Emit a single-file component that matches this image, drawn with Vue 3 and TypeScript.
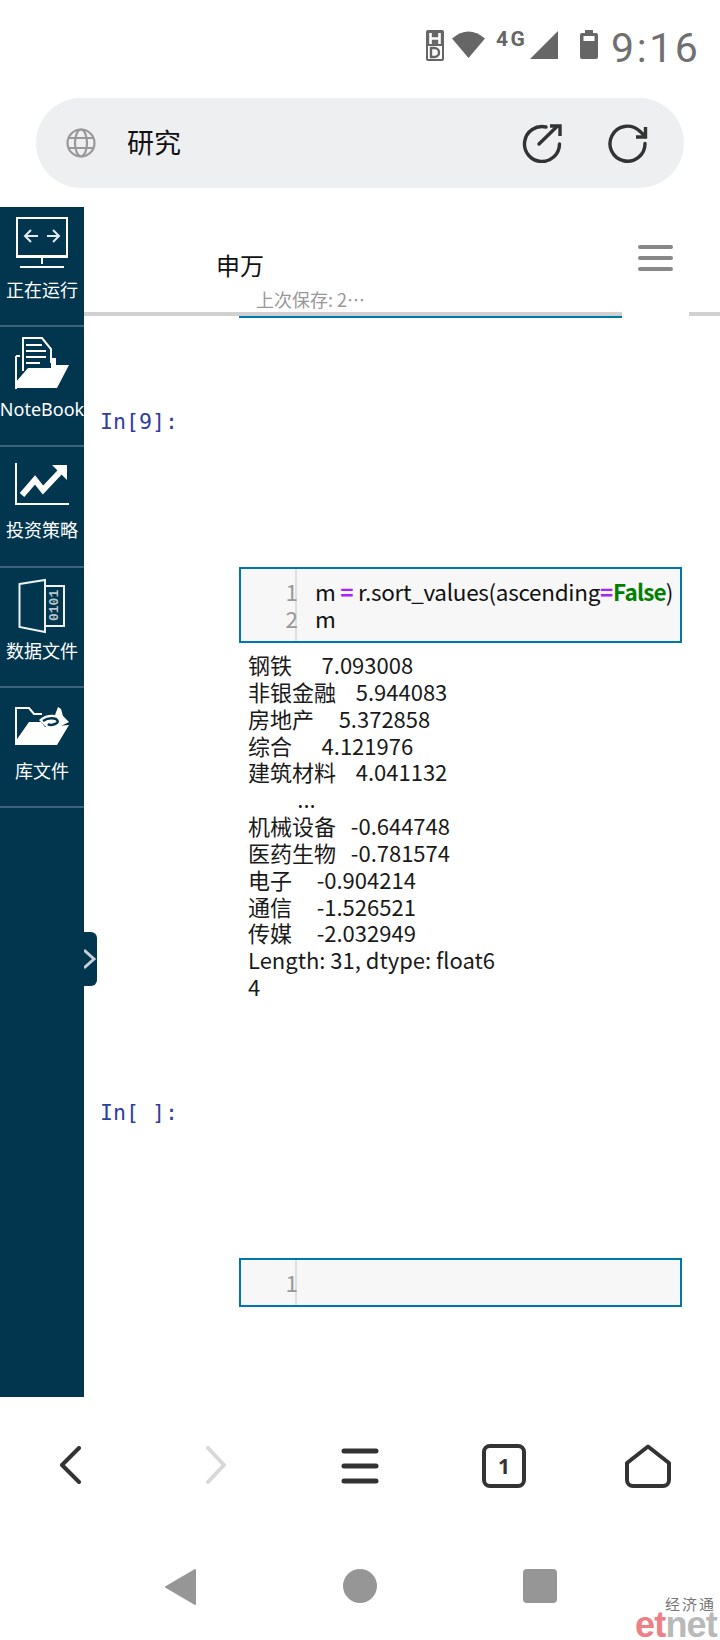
<script setup lang="ts">
const outputLines: string[] = [
  '钢铁      7.093008',
  '非银金融    5.944083',
  '房地产     5.372858',
  '综合      4.121976',
  '建筑材料    4.041132',
  '          ...',
  '机械设备   -0.644748',
  '医药生物   -0.781574',
  '电子     -0.904214',
  '通信     -1.526521',
  '传媒     -2.032949',
  'Length: 31, dtype: float6',
  '4',
]
</script>

<template>
  <div class="phone">
    <header class="status">
      <svg class="hd" width="18" height="31" viewBox="0 0 18 31">
        <rect width="18" height="31" rx="2" fill="#666" />
        <path d="M4.500 3v11M13.500 3v11M4.500 8.500h9" stroke="#fff" stroke-width="2.600" fill="none" />
        <rect x="2" y="16" width="14" height="13" fill="#fff" />
        <path d="M5 18h3.500a4.500 4.500 0 0 1 0 9H5z" stroke="#666" stroke-width="2.400" fill="none" />
      </svg>
      <svg class="wifi" width="33" height="28" viewBox="0 0 33 28">
        <path d="M0 8.500Q16.500-5.500 33 8.500L16.500 28z" fill="#666" />
      </svg>
      <span class="net">4G</span>
      <svg class="signal" width="28" height="28" viewBox="0 0 28 28">
        <path d="M28 0V28H0z" fill="#666" />
      </svg>
      <svg class="battery" width="18" height="29" viewBox="0 0 18 29">
        <path d="M5 3V0h8v3h3a2 2 0 0 1 2 2v22a2 2 0 0 1-2 2H2a2 2 0 0 1-2-2V5a2 2 0 0 1 2-2z" fill="#666" />
        <rect x="3.500" y="6" width="11" height="5" fill="#fff" />
      </svg>
      <span class="time">9:16</span>
    </header>

    <div class="urlbar">
      <svg class="globe" width="30" height="30" viewBox="0 0 30 30" fill="none" stroke="#999" stroke-width="2.200">
        <circle cx="15" cy="15" r="13.500" />
        <ellipse cx="15" cy="15" rx="6" ry="13.500" />
        <path d="M3 10h24M3 20h24" />
      </svg>
      <span class="url-text">研究</span>
      <svg class="share" width="40" height="40" viewBox="0 0 40 40" fill="none" stroke="#333" stroke-width="3.400" stroke-linecap="round">
        <path d="M37.500 21A17.500 17.500 0 1 1 24 4" />
        <path d="M17 21L35 3.500" />
        <path d="M28 3h10v10" stroke-linecap="butt" />
      </svg>
      <svg class="reload" width="40" height="40" viewBox="0 0 40 40" fill="none" stroke="#333" stroke-width="3.400" stroke-linecap="round">
        <path d="M37 20.500A17.500 17.500 0 1 1 31 7.500L37 13" />
        <path d="M37.500 4V14H28" stroke-linecap="butt" />
      </svg>
    </div>

    <div class="body">
      <nav class="sidebar">
        <div class="side-item">
          <div class="side-icon">
            <svg class="ic1" width="52" height="52" viewBox="0 0 52 52" fill="none" stroke="#fff" stroke-width="2">
              <rect x="1" y="1" width="50" height="39" />
              <path d="M0 39.500h52" stroke-width="3" />
              <path d="M26 40v7M4 50h44" />
              <path d="M9 19h13M15 13l-6 6 6 6M43 19H31M37 13l6 6-6 6" stroke="#e4ebee" stroke-width="2" />
            </svg>
          </div>
          <span>正在运行</span>
        </div>
        <div class="side-item">
          <div class="side-icon">
            <svg class="ic2" width="54" height="52" viewBox="0 0 54 52">
              <path d="M1 52V19M1 19h4M8 34V1h19l9 11v14" fill="none" stroke="#fff" stroke-width="2" />
              <path d="M11 8h16M11 14h20M11 20h20M11 26h14" stroke="#fff" stroke-width="2" />
              <path d="M0 51V46L13 31H36V21h5v7H54L42 51z" fill="#fff" />
            </svg>
          </div>
          <span class="latin">NoteBook</span>
        </div>
        <div class="side-item">
          <div class="side-icon">
            <svg class="ic3" width="54" height="42" viewBox="0 0 54 42" fill="none" stroke="#fff">
              <path d="M1 0V41H54" stroke-width="2" />
              <path d="M7 32L20 17L28 27L45 9" stroke-width="6" />
              <path d="M37 2H52V17z" fill="#fff" stroke="none" />
            </svg>
          </div>
          <span>投资策略</span>
        </div>
        <div class="side-item">
          <div class="side-icon">
            <svg class="ic4" width="48" height="56" viewBox="0 0 48 56" fill="none" stroke="#eef2f4" stroke-width="2">
              <path d="M1.500 6L27 2V54L1.500 49z" />
              <path d="M27 8H46V48H27" />
              <text x="-43" y="40" transform="rotate(-90)" class="bits">0101</text>
            </svg>
          </div>
          <span>数据文件</span>
        </div>
        <div class="side-item">
          <div class="side-icon">
            <svg class="ic5" width="54" height="38" viewBox="0 0 54 38">
              <path d="M1 37V1H14L19 7H27" fill="none" stroke="#fff" stroke-width="2" />
              <path d="M0 38V35L14 15H26L30 20L54 18L42 38z" fill="#fff" />
              <path d="M24 13Q30 7 40 8L43 0L46 2L48 9L54 15L44 20Q34 24 30 19" fill="#fff" />
              <path d="M28 14Q34 10 41 12Q45 15 40 17Q35 19 33 17" fill="none" stroke="#02364f" stroke-width="2.500" />
            </svg>
          </div>
          <span>库文件</span>
        </div>
        <div class="toggle">
          <svg width="13" height="24" viewBox="0 0 13 24" fill="none" stroke="#c3d0d7" stroke-width="3">
            <path d="M0 3L10 12L0 21" />
          </svg>
        </div>
      </nav>

      <main class="content">
        <div class="nb-head">
          <div class="titles">
            <div class="nb-title">申万</div>
            <div class="nb-saved">上次保存: 2…</div>
          </div>
          <div class="menu"><i></i><i></i><i></i></div>
        </div>
        <div class="rules">
          <div class="rule-main">
            <div class="rule-gray"></div>
            <div class="rule-blue"></div>
          </div>
          <div class="rule-end"></div>
        </div>

        <div class="prompt first">In[9]:</div>
        <div class="cell two">
          <div class="gutter"><div>1</div><div>2</div></div>
          <div class="code">
            <div>m <b class="op">=</b> r.sort_values(ascending<b class="op">=</b><b class="kw">False</b>)</div>
            <div>m</div>
          </div>
        </div>
        <pre class="output"><template v-for="line in outputLines" :key="line">{{ line + '\n' }}</template></pre>

        <div class="prompt second">In[ ]:</div>
        <div class="cell one">
          <div class="gutter"><div>1</div></div>
          <div class="code"></div>
        </div>
      </main>
    </div>

    <footer class="browser-nav">
      <svg width="28" height="40" viewBox="0 0 28 40" fill="none" stroke="#333" stroke-width="4" stroke-linecap="round" stroke-linejoin="round">
        <path d="M21 2L4 19L21 36" />
      </svg>
      <svg width="28" height="40" viewBox="0 0 28 40" fill="none" stroke="#d8d8d8" stroke-width="4" stroke-linecap="round" stroke-linejoin="round">
        <path d="M6 2L22 19L6 36" />
      </svg>
      <svg width="38" height="36" viewBox="0 0 38 36" fill="none" stroke="#333" stroke-width="5" stroke-linecap="round">
        <path d="M3 3h32M3 18h32M3 33h32" />
      </svg>
      <div class="tabs">1</div>
      <svg width="46" height="44" viewBox="0 0 46 44" fill="none" stroke="#333" stroke-width="4" stroke-linejoin="round">
        <path d="M23 2.500L44 19V36a6 6 0 0 1-6 6H8a6 6 0 0 1-6-6V19z" />
      </svg>
    </footer>

    <footer class="system-nav">
      <svg width="33" height="38" viewBox="0 0 33 38"><path d="M31 2V36L2 19z" fill="#969696" stroke="#969696" stroke-width="2" stroke-linejoin="round" /></svg>
      <div class="dot"></div>
      <div class="square"></div>
    </footer>

    <div class="watermark">
      <div class="wm-cn">经济通</div>
      <div class="wm-en"><span class="et">et</span><span class="net-logo">net</span></div>
    </div>
  </div>
</template>

<style>
html, body { margin: 0; background: #fff; }
</style>

<style scoped>
.phone {
  position: relative;
  width: 720px;
  height: 1640px;
  overflow: hidden;
  background: #fff;
  font-family: "Noto Sans CJK SC", "Noto Sans", sans-serif;
}
.status {
  height: 98px;
  box-sizing: border-box;
  padding: 30px 0 0 426px;
  display: flex;
  align-items: flex-start;
}
.wifi { margin-left: 8px; }
.net {
  margin-left: 11px;
  width: 33px;
  font: 700 21px/19px Roboto, sans-serif;
  letter-spacing: 2.5px;
  color: #666;
  white-space: nowrap;
}
.signal { margin-left: 1px; margin-top: 1px; }
.battery { margin-left: 22px; }
.time {
  margin-left: 13px;
  font: 400 41px/36px Roboto, sans-serif;
  letter-spacing: 2.6px;
  color: #707070;
}
.urlbar {
  margin: 0 36px;
  height: 90px;
  border-radius: 45px;
  background: #eeeff1;
  display: flex;
  align-items: center;
  padding-left: 30px;
  color: #111;
}
.url-text { margin: -4px 0 0 31px; font-size: 27px; flex: 1; }
.share { margin-right: 46px; }
.reload { margin-right: 36px; }

.body {
  margin-top: 19px;
  height: 1190px;
  display: flex;
}
.sidebar {
  position: relative;
  width: 84px;
  flex: none;
  background: #02364f;
  color: #fff;
  font-size: 18px;
}
.side-item {
  height: 120.2px;
  box-sizing: border-box;
  border-bottom: 2px solid #3f6479;
  display: flex;
  flex-direction: column;
  align-items: center;
  white-space: nowrap;
}
.side-icon { height: 70px; flex: none; }
.side-icon svg { display: block; }
.ic1, .ic2, .ic4 { margin-top: 10px; }
.ic3 { margin-top: 16px; }
.ic5 { margin-top: 19px; }
.side-item span { line-height: 24px; }
.latin { font-family: "Noto Sans", sans-serif; font-size: 18px; }
.bits { font: 700 13px "Liberation Mono", monospace; fill: #b9c6cd; stroke: none; }
.toggle {
  position: absolute;
  left: 84px;
  top: 725px;
  width: 13px;
  height: 54px;
  background: #02364f;
  border-radius: 0 6px 6px 0;
  display: flex;
  align-items: center;
}

.content { flex: 1; min-width: 0; }
.nb-head {
  height: 105px;
  display: flex;
  align-items: flex-start;
  justify-content: space-between;
}
.nb-title {
  margin: 41px 0 0 132px;
  font-size: 24px;
  line-height: 34px;
  color: #111;
}
.nb-saved {
  margin: 5px 0 0 172px;
  font-size: 18px;
  line-height: 24px;
  color: #999;
  white-space: nowrap;
}
.menu {
  margin: 38px 47px 0 0;
  width: 35px;
  display: flex;
  flex-direction: column;
  gap: 7px;
}
.menu i { display: block; height: 4px; background: #888; border-radius: 2px; }
.rules { display: flex; height: 6px; }
.rule-main { width: 538px; }
.rule-gray { height: 4px; background: #d0d0d0; }
.rule-blue { height: 2px; margin-left: 155px; background: #0077aa; }
.rule-end { margin-left: 67px; flex: 1; height: 4px; background: #d0d0d0; }
.prompt {
  margin-left: 16px;
  font: 21.6px/28px "DejaVu Sans Mono", monospace;
  color: #303f9f;
}
.first { margin-top: 90px; }
.second { margin-top: 99px; }
.cell {
  margin-left: 155px;
  width: 443px;
  box-sizing: border-box;
  border: 2px solid #0077aa;
  background: #f7f7f7;
  display: flex;
  color: #111;
  font-size: 22.5px;
  line-height: 27px;
}
.cell.two { margin-top: 131px; height: 76px; padding-top: 9px; }
.cell.one { margin-top: 131px; height: 49px; }
.gutter {
  width: 56px;
  box-sizing: border-box;
  text-align: right;
  color: #999;
  border-right: 2px solid #dedede;
  flex: none;
}
.gutter div { margin-right: -3px; }
.cell.two .gutter { margin-top: -9px; padding-top: 9px; }
.cell.one .gutter { padding-top: 9px; }
.code { padding-left: 18px; white-space: nowrap; letter-spacing: -0.3px; }
.op { color: #aa22ff; font-weight: 700; }
.kw { color: #008000; font-weight: 700; letter-spacing: -0.8px; }
.output {
  margin: 8px 0 0 164px;
  font: 22px/26.85px "Noto Sans CJK SC", sans-serif;
  color: #1a1a1a;
}

.browser-nav {
  margin-top: 47px;
  height: 42px;
  display: grid;
  grid-template-columns: repeat(5, 144px);
  justify-items: center;
  align-items: center;
}
.tabs {
  width: 44px;
  height: 44px;
  box-sizing: border-box;
  border: 4px solid #333;
  border-radius: 8px;
  font: 700 21px/36px "Noto Sans", sans-serif;
  color: #333;
  text-align: center;
}
.system-nav {
  margin: 82px 0 0 90px;
  height: 38px;
  display: grid;
  grid-template-columns: repeat(3, 180px);
  justify-items: center;
  align-items: start;
}
.dot {
  margin-top: 1px;
  width: 34px;
  height: 34px;
  border-radius: 50%;
  background: #969696;
}
.square {
  margin-top: 1px;
  width: 34px;
  height: 34px;
  border-radius: 4px;
  background: #969696;
}
.watermark {
  position: absolute;
  right: 3px;
  top: 1595px;
  text-align: right;
}
.wm-cn {
  font-size: 15px;
  line-height: 17px;
  letter-spacing: 2px;
  color: #777;
  margin-right: 1px;
}
.wm-en {
  font: 700 36px/26px "Liberation Sans", sans-serif;
  letter-spacing: -0.8px;
  white-space: nowrap;
}
.et { color: #ec8086; }
.net-logo { color: #b9b9b9; }
</style>
